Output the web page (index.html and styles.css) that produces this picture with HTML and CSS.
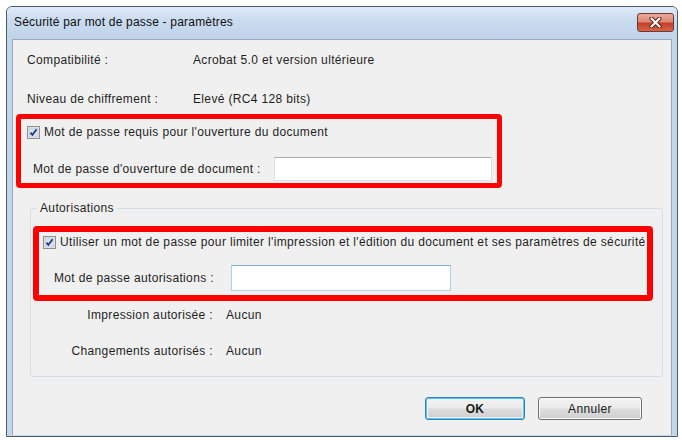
FILE: index.html
```html
<!DOCTYPE html>
<html lang="fr">
<head>
<meta charset="utf-8">
<title>Sécurité par mot de passe - paramètres</title>
<link rel="stylesheet" href="styles.css">
</head>
<body>
<div class="window">
  <div class="titlebar">
    <span class="title">Sécurité par mot de passe - paramètres</span>
    <div class="close">
      <svg width="15" height="11" viewBox="0 0 15 11">
        <path d="M3.5 1.5 L11.5 9.5 M11.5 1.5 L3.5 9.5" stroke="#5a1a12" stroke-width="4" stroke-linecap="round"/>
        <path d="M3.5 1.5 L11.5 9.5 M11.5 1.5 L3.5 9.5" stroke="#ffffff" stroke-width="2.2" stroke-linecap="round"/>
      </svg>
    </div>
  </div>
  <div class="client">
    <div class="info">
      <span>Compatibilité :</span><span>Acrobat 5.0 et version ultérieure</span>
      <span>Niveau de chiffrement :</span><span>Elevé (RC4 128 bits)</span>
    </div>

    <div class="highlight hl-open">
      <div class="check-row">
        <span class="checkbox"><svg width="13" height="13" viewBox="0 0 13 13"><rect x="0.5" y="0.5" width="12" height="12" fill="#f4f4f4" stroke="#8e8f8f"/><rect x="2" y="2" width="9" height="9" fill="#d7e1ee" stroke="#b9c6d6" stroke-width="0.8"/><path d="M3.4 6.6 L5.4 8.8 L9.6 3.3" fill="none" stroke="#23357a" stroke-width="1.7"/></svg></span>
        <span>Mot de passe requis pour l'ouverture du document</span>
      </div>
      <div class="field-row fr-open">
        <span class="field-label">Mot de passe d'ouverture de document :</span>
        <span class="textbox"></span>
      </div>
    </div>

    <fieldset class="group">
      <legend>Autorisations</legend>
      <div class="highlight hl-perm">
        <div class="check-row">
          <span class="checkbox"><svg width="13" height="13" viewBox="0 0 13 13"><rect x="0.5" y="0.5" width="12" height="12" fill="#f4f4f4" stroke="#8e8f8f"/><rect x="2" y="2" width="9" height="9" fill="#d7e1ee" stroke="#b9c6d6" stroke-width="0.8"/><path d="M3.4 6.6 L5.4 8.8 L9.6 3.3" fill="none" stroke="#23357a" stroke-width="1.7"/></svg></span>
          <span>Utiliser un mot de passe pour limiter l'impression et l'édition du document et ses paramètres de sécurité</span>
        </div>
        <div class="field-row fr-perm">
          <span class="field-label">Mot de passe autorisations :</span>
          <span class="textbox hover"></span>
        </div>
      </div>
      <div class="perm-info">
        <span class="pi-label">Impression autorisée :</span><span>Aucun</span>
        <span class="pi-label">Changements autorisés :</span><span>Aucun</span>
      </div>
    </fieldset>

    <div class="buttons">
      <button class="btn btn-default">OK</button>
      <button class="btn btn-cancel">Annuler</button>
    </div>
  </div>
</div>
</body>
</html>
```
FILE: styles.css
```css
html, body {
  margin: 0;
  padding: 0;
  background: #ffffff;
}
body {
  font-family: "Liberation Sans", Arial, sans-serif;
  font-size: 12px;
  letter-spacing: 0.35px;
  color: #1f1f1f;
}

.window {
  box-sizing: border-box;
  margin: 6px 0 0 6px;
  width: 672px;
  height: 431px;
  border: 1px solid #4c5a6a;
  border-radius: 6px 6px 0 0;
  background: #c4d6ea;
  display: flex;
  flex-direction: column;
}

.titlebar {
  height: 32px;
  flex: none;
  display: flex;
  align-items: center;
  justify-content: space-between;
  padding: 0 3px 0 7px;
  border-radius: 5px 5px 0 0;
  background: linear-gradient(#dfeaf6, #c9dbef 45%, #bfd3ea);
}
.title {
  font-size: 12px;
  letter-spacing: 0.2px;
  color: #111;
  margin-top: -3px;
}
.close {
  align-self: flex-start;
  margin-top: 6px;
  width: 37px;
  height: 19px;
  box-sizing: border-box;
  border: 1px solid #6d3a33;
  border-radius: 3px;
  background: linear-gradient(#e9ab9b, #dc8874 45%, #c43f27 55%, #d5634a);
  display: flex;
  align-items: center;
  justify-content: center;
}

.client {
  flex: 1;
  margin: 0 5px 1px;
  background: #f0f0f0;
  border: 1px solid #9aaabd;
  border-bottom: none;
  display: flex;
  flex-direction: column;
}

.info {
  display: grid;
  grid-template-columns: 166px auto;
  row-gap: 23px;
  margin: 12px 0 0 14px;
  line-height: 16px;
}

.highlight {
  box-sizing: border-box;
  border-style: solid;
  border-color: #ff0000;
  border-radius: 4px;
}
.hl-open {
  width: 486px;
  margin: 7px 0 0 3px;
  border-width: 5px;
  padding: 5px 5px 2px 6px;
}
.hl-perm {
  margin: 10px 9px 0 2px;
  border-width: 6px;
  padding: 2px 0 4px 4px;
}

.check-row {
  display: flex;
  align-items: center;
  gap: 4px;
  height: 16px;
  line-height: 16px;
  white-space: nowrap;
}
.checkbox {
  display: flex;
  width: 13px;
  height: 13px;
}

.field-row {
  display: flex;
  align-items: center;
}
.fr-open {
  margin-top: 17px;
  padding-left: 6px;
  height: 24px;
}
.fr-open .field-label { width: 241px; }
.fr-open .textbox { width: 218px; height: 24px; }
.fr-perm {
  margin-top: 15px;
  padding-left: 11px;
  height: 26px;
}
.fr-perm .field-label { width: 177px; }
.fr-perm .textbox { width: 220px; height: 26px; }

.textbox {
  box-sizing: border-box;
  background: #ffffff;
  border: 1px solid #dde1e6;
  border-top-color: #a9adb3;
}
.textbox.hover {
  border-color: #b5cfe7;
  border-top-color: #7ea8cf;
}

.group {
  margin: 12px 8px 0 17px;
  padding: 0;
  border: 1px solid #d5dfe5;
  border-radius: 3px;
  min-width: 0;
}
.group legend {
  padding: 0 3px;
  margin-left: 6px;
  line-height: 16px;
}

.perm-info {
  display: grid;
  grid-template-columns: 182px auto;
  column-gap: 13px;
  row-gap: 20px;
  margin-top: 6px;
  padding-bottom: 17px;
  line-height: 16px;
}
.pi-label {
  text-align: right;
}

.buttons {
  display: flex;
  justify-content: flex-end;
  gap: 13px;
  margin-top: 20px;
  padding-right: 29px;
}
.btn {
  box-sizing: border-box;
  height: 23px;
  font-family: "Liberation Sans", Arial, sans-serif;
  font-size: 12px;
  letter-spacing: 0.35px;
  color: #1a1a1a;
  border: 1px solid #707070;
  border-radius: 3px;
  background: linear-gradient(#f3f3f3, #ebebeb 48%, #dddddd 52%, #cfcfcf);
  box-shadow: inset 0 0 0 1px #fbfbfb;
  padding: 0;
}
.btn-default {
  width: 100px;
  font-weight: bold;
  border-color: #3c7fb1;
  box-shadow: inset 0 0 0 1px #58c6f2, inset 0 0 0 2px #e8f4fb;
}
.btn-cancel {
  width: 104px;
}
```
